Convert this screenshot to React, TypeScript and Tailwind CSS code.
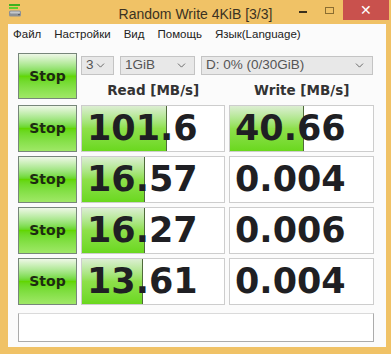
import React from 'react';
import { ChevronDown } from 'lucide-react';

interface Row {
  read: string;
  write: string;
  readFill: number;
  writeFill: number;
}

const rows: Row[] = [
  { read: '101.6', write: '40.66', readFill: 85, writeFill: 74 },
  { read: '16.57', write: '0.004', readFill: 63, writeFill: 0 },
  { read: '16.27', write: '0.006', readFill: 63, writeFill: 0 },
  { read: '13.61', write: '0.004', readFill: 61, writeFill: 0 },
];

const ui = { fontFamily: '"Liberation Sans", Arial, sans-serif' };
const bold = { fontFamily: '"DejaVu Sans", Verdana, sans-serif' };

function StopButton() {
  return (
    <button
      className="flex h-full w-full items-center justify-center border border-[#77867a] bg-gradient-to-b from-[#eef7e6] via-[#62d600] to-[#9fe866] text-[14px] font-bold text-[#1d2b12]"
      style={bold}
    >
      Stop
    </button>
  );
}

function Combo({ label, width }: { label: string; width: string }) {
  return (
    <div
      className={`flex h-[19px] ${width} items-center justify-between border border-[#c4c4c4] bg-[#e8e8e8] pl-1 pr-1.5 text-[13.5px] text-[#555]`}
      style={ui}
    >
      <span>{label}</span>
      <ChevronDown size={13} strokeWidth={1.4} className="text-[#444]" />
    </div>
  );
}

function Cell({ value, fill }: { value: string; fill: number }) {
  return (
    <div className="relative flex h-full items-center overflow-hidden border border-[#cdcdcd] bg-white">
      {fill > 0 && (
        <div
          className="absolute inset-y-0 left-0 border-r border-[#4f6a3a] bg-gradient-to-b from-[#dceed2] via-[#8ee04a] to-[#6ad81c]"
          style={{ width: fill }}
        />
      )}
      <span className="relative pl-[5px] text-[35px] leading-none font-bold text-[#1f1f23]" style={bold}>
        {value}
      </span>
    </div>
  );
}

function AppIcon() {
  return (
    <svg width="16" height="16" viewBox="0 0 16 16">
      <rect x="2" y="1" width="11" height="2" fill="#3fb11f" />
      <rect x="2" y="4" width="9" height="2" fill="#5fcf2a" />
      <rect x="2" y="7.5" width="12" height="6" rx="1.5" fill="#8d9196" />
      <rect x="3" y="8.5" width="10" height="2" rx="1" fill="#c4c7cb" />
      <rect x="11" y="11" width="2" height="1.2" fill="#5b5f64" />
    </svg>
  );
}

export default function App() {
  return (
    <div className="flex h-[354px] w-[391px] flex-col bg-[#f0c266]" style={ui}>
      {/* Title bar */}
      <div className="flex h-[24px] items-start">
        <div className="w-[92px] pl-[7px] pt-[3px]">
          <AppIcon />
        </div>
        <div className="flex-1 pt-[4px] text-center text-[14px] text-[#3b3222]">Random Write 4KiB [3/3]</div>
        <div className="flex h-[20px] items-center gap-[18px] pr-[9px]">
          <div className="mt-[3px] h-[2px] w-[8px] bg-[#3a2f1c]" />
          <div className="h-[7px] w-[9px] border border-[#8a6d30]" />
        </div>
        <div className="flex h-[20px] w-[46px] items-center justify-center bg-[#c9514d] text-[14px] text-white">
          ✕
        </div>
        <div className="w-[2px]" />
      </div>

      {/* Client area */}
      <div className="mb-[7px] ml-[8px] mr-[5px] flex flex-1 flex-col bg-[#fbfbfb]">
        <div className="flex h-[21px] items-center gap-[13px] pl-[5px] text-[11.5px] text-[#222]">
          <span>Файл</span>
          <span>Настройки</span>
          <span>Вид</span>
          <span>Помощь</span>
          <span>Язык(Language)</span>
        </div>

        <div className="pl-[10px] pt-[8px]">
          <div className="grid grid-cols-[59px_144px_145px] gap-x-[4px]">
            <div className="h-[46px]">
              <StopButton />
            </div>
            <div className="col-span-2 flex flex-col">
              <div className="flex gap-[6px] pt-[3px]">
                <Combo label="3" width="w-[33px]" />
                <Combo label="1GiB" width="w-[75px]" />
                <Combo label="D: 0% (0/30GiB)" width="w-[172px]" />
              </div>
              <div className="grid grid-cols-2 gap-x-[4px] pt-[5px] text-[13.5px] font-bold text-[#333]" style={bold}>
                <div className="text-center">Read [MB/s]</div>
                <div className="text-center">Write [MB/s]</div>
              </div>
            </div>
          </div>

          <div className="mt-[5px] flex flex-col gap-[4px]">
            {rows.map((r, i) => (
              <div key={i} className="grid h-[47px] grid-cols-[59px_144px_145px] gap-x-[4px]">
                <StopButton />
                <Cell value={r.read} fill={r.readFill} />
                <Cell value={r.write} fill={r.writeFill} />
              </div>
            ))}
          </div>

          <div className="mt-[8px] h-[29px] w-[356px] border border-[#ababab] border-t-[#dadada] bg-white" />
        </div>
      </div>
    </div>
  );
}
